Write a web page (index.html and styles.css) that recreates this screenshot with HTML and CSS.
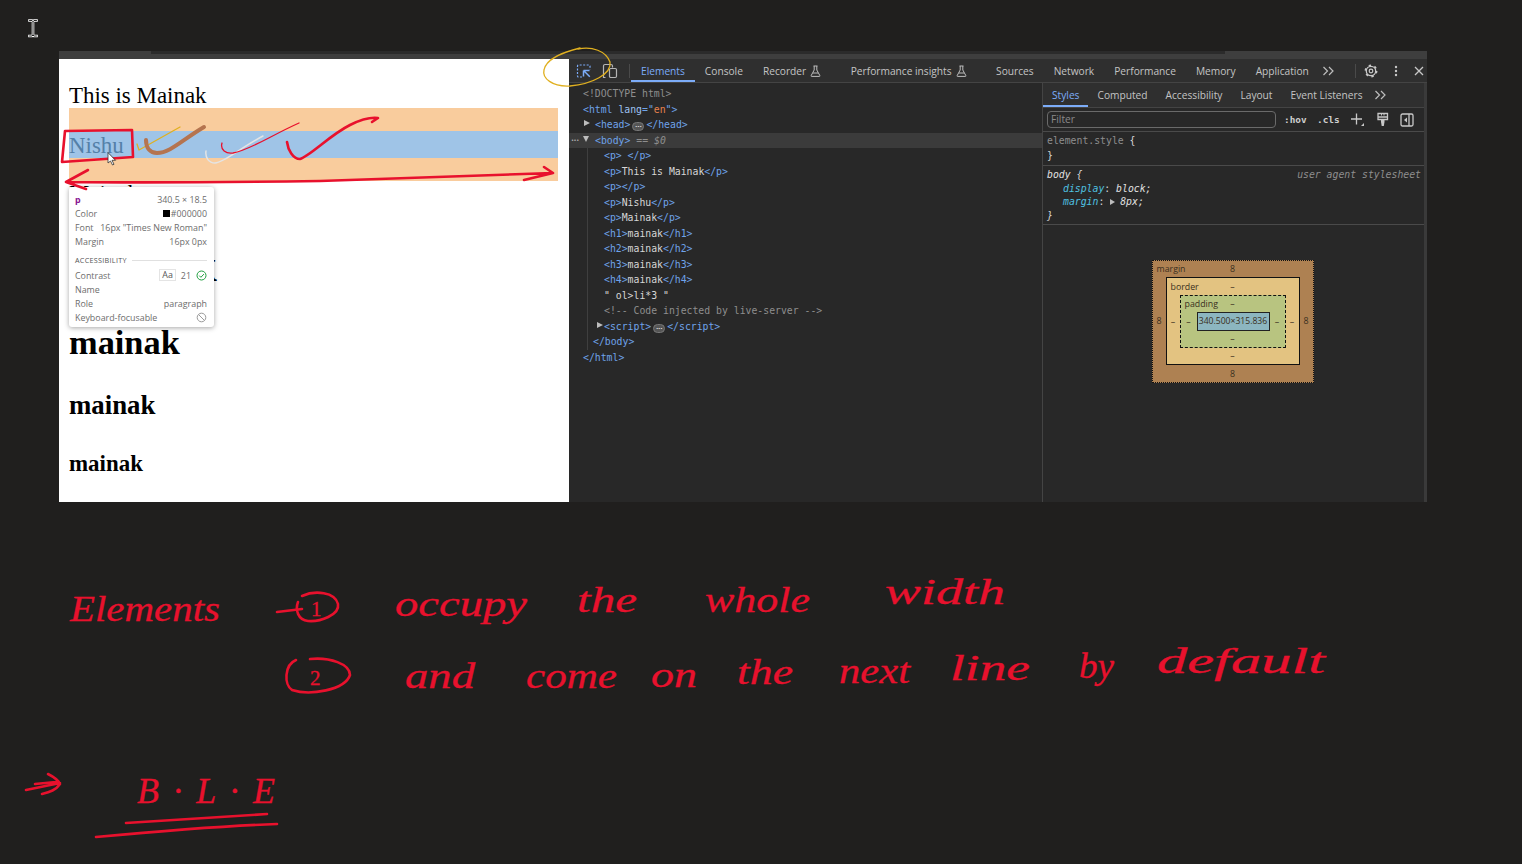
FILE: index.html
```html
<!DOCTYPE html>
<html lang="en">
<head>
    <meta charset="UTF-8">
    <title>Block level elements</title>
    <link rel="stylesheet" href="styles.css">
</head>
<body>
<div class="window">
    <div class="window-strip"><div class="window-strip-tab"></div></div>
    <div class="window-main">
        <div class="page">
            <p class="page-p">This is Mainak</p>
            <div class="hl-margin"><p class="hl-content">Nishu</p></div>
            <p class="page-p page-p-next">Mainak</p>
            <h1>mainak</h1>
            <h2>mainak</h2>
            <h3>mainak</h3>
            <h4>mainak</h4>

            <div class="tip">
                <div class="tip-row tip-head"><span class="tip-tag">p</span><span>340.5 × 18.5</span></div>
                <div class="tip-row"><span>Color</span><span class="tip-val"><i class="swatch"></i>#000000</span></div>
                <div class="tip-row"><span>Font</span><span class="tip-val">16px "Times New Roman"</span></div>
                <div class="tip-row"><span>Margin</span><span class="tip-val">16px 0px</span></div>
                <div class="tip-section"><span>ACCESSIBILITY</span><i class="tip-line"></i></div>
                <div class="tip-row">
                    <span>Contrast</span>
                    <span class="tip-val tip-contrast">
                        <b class="aa">Aa</b><span>21</span>
                        <svg width="11" height="11" viewBox="0 0 11 11"><circle cx="5.5" cy="5.5" r="4.5" fill="none" stroke="#1e9e3e" stroke-width="1"/><path d="M3.2 5.6l1.7 1.7 3-3.2" fill="none" stroke="#1e9e3e" stroke-width="1"/></svg>
                    </span>
                </div>
                <div class="tip-row"><span>Name</span></div>
                <div class="tip-row"><span>Role</span><span class="tip-val">paragraph</span></div>
                <div class="tip-row">
                    <span>Keyboard-focusable</span>
                    <svg width="11" height="11" viewBox="0 0 11 11"><circle cx="5.5" cy="5.5" r="4.3" fill="none" stroke="#9a9a9a" stroke-width="1"/><path d="M2.5 2.5l6 6" stroke="#9a9a9a" stroke-width="1"/></svg>
                </div>
            </div>
        </div>

        <div class="devtools">
            <div class="tabbar">
                <svg class="tool-icon" width="16" height="16" viewBox="0 0 16 16"><path d="M6 14H2.500A1 1 0 0 1 1.500 13V3A1 1 0 0 1 2.500 2H13A1 1 0 0 1 14 3V6.500" fill="none" stroke="#7cacf8" stroke-width="1.200" stroke-dasharray="2 1.500"/><path d="M7.500 7.500h6M7.500 7.500v6M7.800 7.800l6 6" fill="none" stroke="#7cacf8" stroke-width="1.500"/></svg>
                <svg class="tool-icon" width="16" height="16" viewBox="0 0 16 16"><path d="M3.500 14.500h-2V3A1.500 1.500 0 0 1 3 1.500h6A1.500 1.500 0 0 1 10.500 3v1.500" fill="none" stroke="#b5b5b5" stroke-width="1.200"/><rect x="7.500" y="5.500" width="7" height="9" rx="1.200" fill="none" stroke="#b5b5b5" stroke-width="1.200"/></svg>
                <i class="tabbar-div"></i>
                <span class="tab tab-on">Elements</span>
                <span class="tab">Console</span>
                <span class="tab tab-flask">Recorder
                    <svg width="11" height="12" viewBox="0 0 11 12"><path d="M3.500 1h4M4.200 1v4L1.200 10.500a.6.6 0 0 0 .5.9h7.600a.6.6 0 0 0 .5-.9L6.800 5V1M3 8h5" fill="none" stroke="#bdbdbd" stroke-width="1"/></svg>
                </span>
                <span class="tab tab-flask">Performance insights
                    <svg width="11" height="12" viewBox="0 0 11 12"><path d="M3.500 1h4M4.200 1v4L1.200 10.500a.6.6 0 0 0 .5.9h7.600a.6.6 0 0 0 .5-.9L6.800 5V1M3 8h5" fill="none" stroke="#bdbdbd" stroke-width="1"/></svg>
                </span>
                <span class="tab">Sources</span>
                <span class="tab">Network</span>
                <span class="tab">Performance</span>
                <span class="tab">Memory</span>
                <span class="tab">Application</span>
                <svg class="more" width="13" height="10" viewBox="0 0 13 10"><path d="M1.500 1l4 4-4 4M7 1l4 4-4 4" fill="none" stroke="#bdbdbd" stroke-width="1.200"/></svg>
                <div class="tabbar-right">
                    <i class="tabbar-div"></i>
                    <svg width="14" height="14" viewBox="0 0 14 14"><circle cx="7" cy="7" r="4.700" fill="none" stroke="#c8c8c8" stroke-width="1.300"/><circle cx="7" cy="7" r="5.600" fill="none" stroke="#c8c8c8" stroke-width="1.700" stroke-dasharray="2.300 3.560"/><circle cx="7" cy="7" r="1.800" fill="none" stroke="#c8c8c8" stroke-width="1.200"/></svg>
                    <svg width="4" height="12" viewBox="0 0 4 12"><circle cx="2" cy="2" r="1.200" fill="#c8c8c8"/><circle cx="2" cy="6" r="1.200" fill="#c8c8c8"/><circle cx="2" cy="10" r="1.200" fill="#c8c8c8"/></svg>
                    <svg width="10" height="10" viewBox="0 0 10 10"><path d="M1 1l8 8M9 1l-8 8" stroke="#c8c8c8" stroke-width="1.300"/></svg>
                </div>
            </div>

            <div class="panels">
                <div class="tree">
                    <div class="line indent-0"><span class="c-grey">&lt;!DOCTYPE html&gt;</span></div>
                    <div class="line indent-0"><span class="c-tag">&lt;html</span> <span class="c-attr">lang</span><span class="c-tag">="</span><span class="c-val">en</span><span class="c-tag">"&gt;</span></div>
                    <div class="line indent-1"><i class="tri tri-right"></i><span class="c-tag">&lt;head&gt;</span><span class="pill">•••</span><span class="c-tag">&lt;/head&gt;</span></div>
                    <div class="line indent-1 line-on"><span class="gutter-dots">•••</span><i class="tri tri-down"></i><span class="c-tag">&lt;body&gt;</span> <span class="c-grey c-it">== $0</span></div>
                    <div class="tree-body">
                        <div class="line"><span class="c-tag">&lt;p&gt; &lt;/p&gt;</span></div>
                        <div class="line"><span class="c-tag">&lt;p&gt;</span>This is Mainak<span class="c-tag">&lt;/p&gt;</span></div>
                        <div class="line"><span class="c-tag">&lt;p&gt;&lt;/p&gt;</span></div>
                        <div class="line"><span class="c-tag">&lt;p&gt;</span>Nishu<span class="c-tag">&lt;/p&gt;</span></div>
                        <div class="line"><span class="c-tag">&lt;p&gt;</span>Mainak<span class="c-tag">&lt;/p&gt;</span></div>
                        <div class="line"><span class="c-tag">&lt;h1&gt;</span>mainak<span class="c-tag">&lt;/h1&gt;</span></div>
                        <div class="line"><span class="c-tag">&lt;h2&gt;</span>mainak<span class="c-tag">&lt;/h2&gt;</span></div>
                        <div class="line"><span class="c-tag">&lt;h3&gt;</span>mainak<span class="c-tag">&lt;/h3&gt;</span></div>
                        <div class="line"><span class="c-tag">&lt;h4&gt;</span>mainak<span class="c-tag">&lt;/h4&gt;</span></div>
                        <div class="line">" ol&gt;li*3 "</div>
                        <div class="line"><span class="c-grey">&lt;!-- Code injected by live-server --&gt;</span></div>
                        <div class="line"><i class="tri tri-right tri-script"></i><span class="c-tag">&lt;script&gt;</span><span class="pill">•••</span><span class="c-tag">&lt;/script&gt;</span></div>
                        <div class="line line-close"><span class="c-tag">&lt;/body&gt;</span></div>
                    </div>
                    <div class="line indent-0"><span class="c-tag">&lt;/html&gt;</span></div>
                </div>

                <div class="side">
                    <div class="subtabs">
                        <span class="subtab subtab-on">Styles</span>
                        <span class="subtab">Computed</span>
                        <span class="subtab">Accessibility</span>
                        <span class="subtab">Layout</span>
                        <span class="subtab">Event Listeners</span>
                        <svg class="more-sub" width="13" height="10" viewBox="0 0 13 10"><path d="M1.500 1l4 4-4 4M7 1l4 4-4 4" fill="none" stroke="#bdbdbd" stroke-width="1.200"/></svg>
                    </div>
                    <div class="filterbar">
                        <div class="filter">Filter</div>
                        <span class="flag">:hov</span>
                        <span class="flag">.cls</span>
                        <div class="filter-icons">
                            <svg width="15" height="15" viewBox="0 0 15 15"><path d="M6.500 1.500v11M1 7h11" stroke="#c8c8c8" stroke-width="1.300"/><path d="M14 11v3h-3z" fill="#c8c8c8"/></svg>
                            <svg width="13" height="15" viewBox="0 0 13 15"><path d="M2 1.500h9.500v6H2zM2 5h9.500" fill="none" stroke="#c8c8c8" stroke-width="1.300"/><path d="M5.500 1.500v2M8 1.500v2" stroke="#c8c8c8"/><path d="M5 7.500h3.500V10l-.7 4h-2.100L5 10z" fill="#c8c8c8"/></svg>
                            <svg width="14" height="14" viewBox="0 0 14 14"><rect x="1" y="1" width="12" height="12" rx="1.500" fill="none" stroke="#c8c8c8" stroke-width="1.300"/><path d="M9 1v12" stroke="#c8c8c8" stroke-width="1.300"/><path d="M7 4.500v5L4 7z" fill="#c8c8c8"/></svg>
                        </div>
                    </div>
                    <div class="rule rule-el">
                        <div class="rule-line"><span class="c-grey">element.style</span> <span class="c-brace">{</span></div>
                        <div class="rule-line"><span class="c-brace">}</span></div>
                    </div>
                    <div class="rule rule-body">
                        <div class="rule-line rule-head"><span class="c-sel">body <span class="c-brace">{</span></span><span class="c-src">user agent stylesheet</span></div>
                        <div class="rule-line rule-prop"><span class="c-prop">display</span>: <span class="c-sel">block;</span></div>
                        <div class="rule-line rule-prop"><span class="c-prop">margin</span>: <i class="tri tri-right tri-inline"></i><span class="c-sel">8px;</span></div>
                        <div class="rule-line"><span class="c-brace c-it">}</span></div>
                    </div>
                    <div class="boxmodel">
                        <div class="bm bm-margin">
                            <div class="bm-top"><span class="bm-label">margin</span><span>8</span></div>
                            <span class="bm-side">8</span>
                            <div class="bm bm-border">
                                <div class="bm-top"><span class="bm-label">border</span><span>–</span></div>
                                <span class="bm-side">–</span>
                                <div class="bm bm-padding">
                                    <div class="bm-top"><span class="bm-label">padding</span><span>–</span></div>
                                    <span class="bm-side">–</span>
                                    <div class="bm-content">340.500×315.836</div>
                                    <span class="bm-side">–</span>
                                    <div class="bm-bottom">–</div>
                                </div>
                                <span class="bm-side">–</span>
                                <div class="bm-bottom">–</div>
                            </div>
                            <span class="bm-side">8</span>
                            <div class="bm-bottom">8</div>
                        </div>
                    </div>
                </div>
                <div class="rail"></div>
            </div>
        </div>
    </div>
</div>

<!-- pen annotations on top of the screen recording -->
<svg class="ink" width="1522" height="864" viewBox="0 0 1522 864">
    <g class="pen-yellow">
        <path d="M578 49C592 46 606 51 610 62C612 74 592 84 570 86C552 87 542 78 544 70C546 58 564 52 580 48"/>
        <path d="M137 144L139 150L180 127" class="thin"/>
    </g>
    <path class="pen-brown" d="M146 140C146 148 150 153 157 153C170 153 182 140 204 127"/>
    <path class="pen-white" d="M206 151C205 158 209 163 215 163C225 162 240 148 263 136"/>
    <g class="pen-red">
        <path d="M65 131L132 130L133 157L62 162Z"/>
        <path d="M287 142C288 150 293 159 300 159C310 156 330 135 350 125C362 119 370 117 378 118L372 122"/>
        <path d="M66 182C150 183 250 182 320 181C400 178 480 176 553 173M88 170L66 182L86 189M544 167L553 173L524 180"/>
        <path class="thin" d="M222 143C220 150 226 154 233 153C250 150 270 136 299 123"/>

        <path d="M277 612L302 609"/>
        <path d="M302 596C315 590 335 592 338 604C340 615 320 622 308 621C298 620 295 610 298 602"/>
        <path d="M296 660C284 665 284 685 292 690C310 696 345 690 350 675C350 664 330 657 310 659"/>
        <path d="M26 790L60 783M35 784L56 782M48 774C54 777 58 780 60 784C56 790 50 792 42 794"/>
        <path d="M126 823L267 814M96 837C150 832 220 826 277 824"/>
    </g>
    <path class="cursor-i-out" d="M29.500 20.500h2.500l1 1 1-1h2.500M33 21.500v14M29.500 36h2.500l1-1 1 1h2.500"/>
    <path class="cursor-i-in" d="M29.500 20.500h2.500l1 1 1-1h2.500M33 21.500v14M29.500 36h2.500l1-1 1 1h2.500"/>
    <path class="cursor-a" d="M108 153v10l2.500-2 2 4 1.500-.7-2-4h3.200z"/>

    <g class="ink-words">
        <text x="70" y="621" textLength="150" lengthAdjust="spacingAndGlyphs">Elements</text>
        <text x="395" y="616" textLength="132" lengthAdjust="spacingAndGlyphs">occupy</text>
        <text x="577" y="612" textLength="60" lengthAdjust="spacingAndGlyphs">the</text>
        <text x="705" y="612" textLength="105" lengthAdjust="spacingAndGlyphs">whole</text>
        <text x="885" y="604" textLength="120" lengthAdjust="spacingAndGlyphs">width</text>
        <text x="405" y="688" textLength="70" lengthAdjust="spacingAndGlyphs">and</text>
        <text x="526" y="688" textLength="91" lengthAdjust="spacingAndGlyphs">come</text>
        <text x="651" y="687" textLength="46" lengthAdjust="spacingAndGlyphs">on</text>
        <text x="737" y="684" textLength="56" lengthAdjust="spacingAndGlyphs">the</text>
        <text x="839" y="683" textLength="71" lengthAdjust="spacingAndGlyphs">next</text>
        <text x="950" y="680" textLength="80" lengthAdjust="spacingAndGlyphs">line</text>
        <text x="1079" y="678" textLength="35" lengthAdjust="spacingAndGlyphs">by</text>
        <text x="1157" y="673" textLength="168" lengthAdjust="spacingAndGlyphs">default</text>
        <text x="137" y="803" textLength="138" lengthAdjust="spacing">B · L · E</text>
        <text class="ink-num" x="311" y="616">1</text>
        <text class="ink-num" x="310" y="685">2</text>
    </g>
</svg>
</body>
</html>
```

FILE: styles.css
```css
body {
    margin: 0;
    height: 864px;
    overflow: hidden;
    background-color: #201f1e;
    font-family: "Open Sans", Arial, sans-serif;
    position: relative;
    padding: 51px 95px 0 59px;
    box-sizing: border-box;
}
.window {
    height: 451px;
    display: flex;
    flex-direction: column;
}
.window-strip {
    height: 8px;
    flex: none;
    background: #3e3e3e;
    padding-left: 92px;
    padding-right: 202px;
}
.window-strip-tab {
    height: 3px;
    background: #2b2b2b;
}
.window-main {
    flex: 1;
    display: flex;
    min-height: 0;
}

/* page under inspection */
.page {
    width: 510px;
    flex: none;
    background: #fff;
    padding: 0 11.5px 0 10px;
    box-sizing: border-box;
    position: relative;
    overflow: hidden;
    font-family: "Liberation Serif", "Times New Roman", serif;
    font-size: 22.93px;
    color: #000;
}
.page-p {
    margin: 24px 0 0;
    line-height: 25px;
}
.page-p-next {
    margin-top: 0;
    line-height: normal;
}
.hl-margin {
    background: #f9cc9d;
    padding: 23px 0;
}
.hl-content {
    margin: 0;
    padding-top: 2px;
    line-height: 25px;
    background: #9fc4e7;
    color: #5480a8;
}
.page h1 { font-size: 2em; margin: 32px 0 .67em; }
.page h2 { font-size: 1.5em; margin: .83em 0; }
.page h3 { font-size: 1.17em; margin: 28px 0 1em; }
.page h4 { font-size: 1em; margin: 29.5px 0 1.33em; }

.tip {
    position: absolute;
    left: 10px;
    top: 128px;
    width: 145px;
    height: 140px;
    box-sizing: border-box;
    padding: 5px 7px 0 6px;
    background: #fff;
    border-radius: 3px;
    box-shadow: 0 1px 5px rgba(0, 0, 0, .35);
    font-family: "Open Sans", Arial, sans-serif;
    font-size: 8.9px;
    color: #6d6d6d;
}
.tip-row {
    height: 14px;
    display: flex;
    justify-content: space-between;
    align-items: center;
}
.tip-tag {
    color: #881391;
    font-weight: 700;
}
.tip-val {
    display: flex;
    align-items: center;
}
.swatch {
    width: 7px;
    height: 7px;
    background: #000;
    margin-right: 1px;
}
.tip-section {
    display: flex;
    align-items: center;
    height: 16px;
    padding-top: 4px;
    font-size: 7.2px;
    letter-spacing: .3px;
    color: #555;
}
.tip-line {
    flex: 1;
    height: 1px;
    background: #e0e0e0;
    margin-left: 5px;
}
.tip-contrast {
    gap: 5px;
}
.aa {
    font-weight: 400;
    border: 1px solid #e4e4e4;
    padding: 0 2px;
    line-height: 10px;
    color: #555;
}

/* devtools */
.devtools {
    flex: 1;
    display: flex;
    flex-direction: column;
    min-width: 0;
    background: #282828;
    font-size: 10.2px;
    color: #c4c4c4;
}
.tabbar {
    height: 24px;
    flex: none;
    display: flex;
    align-items: center;
    padding-left: 7px;
    background: #2f2f2f;
    border-bottom: 1px solid #444;
    box-sizing: border-box;
}
.tool-icon {
    margin-right: 10px;
}
.tabbar-div {
    width: 1px;
    height: 14px;
    background: #4a4a4a;
    margin-left: 1px;
    margin-right: 1px;
}
.tab {
    height: 100%;
    display: flex;
    align-items: center;
    padding: 0 10px;
    box-sizing: border-box;
    white-space: nowrap;
}
.tab-on {
    color: #7cacf8;
    border-bottom: 2px solid #7cacf8;
    padding-top: 2px;
}
.tab svg {
    margin-left: 4px;
}
.tab-flask {
    margin-right: 9.5px;
}
.more {
    margin-left: 3px;
}
.tabbar-right {
    margin-left: auto;
    display: flex;
    align-items: center;
    gap: 16px;
    padding-right: 3px;
}
.tabbar-right .tabbar-div {
    margin-right: -8px;
}
.panels {
    flex: 1;
    display: flex;
    min-height: 0;
}
.tree {
    width: 474px;
    flex: none;
    padding-top: 3px;
    box-sizing: border-box;
    border-right: 1px solid #444;
    font-family: "DejaVu Sans Mono", "Liberation Mono", monospace;
    font-size: 9.8px;
    color: #d6d6d6;
}
.line {
    height: 15.5px;
    line-height: 15.5px;
    white-space: pre;
    position: relative;
}
.indent-0 { padding-left: 14px; }
.indent-1 { padding-left: 26px; }
.line-on {
    background: #3b3b3b;
}
.tree-body {
    margin-left: 18px;
    padding-left: 16px;
    border-left: 1px solid #3f3f3f;
}
.line-close {
    margin-left: -11px;
}
.c-grey { color: #8e8e8e; }
.c-tag { color: #6fa3ea; }
.c-attr { color: #9fc3f2; }
.c-val { color: #e9824d; }
.c-it { font-style: italic; }
.c-brace { color: #d6d6d6; }
.c-sel { color: #e0e0e0; font-style: italic; }
.c-prop { color: #4fc1e0; font-style: italic; }
.c-src { color: #8e8e8e; font-style: italic; }
.tri {
    position: absolute;
    width: 0;
    height: 0;
}
.tri-right {
    left: 15px;
    top: 3px;
    border-left: 6px solid #bdbdbd;
    border-top: 3.5px solid transparent;
    border-bottom: 3.5px solid transparent;
}
.tri-down {
    left: 14px;
    top: 3px;
    border-top: 6px solid #bdbdbd;
    border-left: 3.5px solid transparent;
    border-right: 3.5px solid transparent;
}
.tri-script {
    left: -7px;
}
.tri-inline {
    position: static;
    display: inline-block;
    margin-right: 5px;
    vertical-align: 0;
    border-left: 5px solid #bdbdbd;
    border-top-width: 3px;
    border-bottom-width: 3px;
}
.gutter-dots {
    position: absolute;
    left: 2px;
    font-size: 5px;
    letter-spacing: -.4px;
    color: #c8c8c8;
}
.pill {
    display: inline-block;
    width: 12px;
    height: 9px;
    margin: 0 2px;
    line-height: 7px;
    text-align: center;
    vertical-align: 0;
    border-radius: 5px;
    background: #555;
    border: 1px solid #777;
    box-sizing: border-box;
    font-size: 4px;
    letter-spacing: -.2px;
    color: #e0e0e0;
}
.side {
    flex: 1;
    min-width: 0;
    display: flex;
    flex-direction: column;
}
.rail {
    width: 3px;
    flex: none;
    background: #3a3a3a;
}
.subtabs {
    height: 25px;
    flex: none;
    display: flex;
    align-items: center;
    background: #2f2f2f;
    border-bottom: 1px solid #444;
    box-sizing: border-box;
}
.subtab {
    height: 100%;
    display: flex;
    align-items: center;
    padding: 0 9px;
    box-sizing: border-box;
    white-space: nowrap;
}
.subtab-on {
    color: #7cacf8;
    border-bottom: 2px solid #7cacf8;
    padding-top: 2px;
}
.more-sub {
    margin-left: 2px;
}
.filterbar {
    height: 24px;
    flex: none;
    display: flex;
    align-items: center;
    padding-left: 4px;
    border-bottom: 1px solid #4a4a4a;
    box-sizing: border-box;
}
.filter {
    width: 229px;
    height: 17px;
    line-height: 15px;
    box-sizing: border-box;
    padding-left: 3px;
    border: 1px solid #6a6a6a;
    border-radius: 4px;
    color: #8a8a8a;
    margin-right: 8px;
}
.flag {
    width: 33px;
    font-family: "DejaVu Sans Mono", "Liberation Mono", monospace;
    font-size: 9.4px;
    font-weight: 700;
    color: #cfcfcf;
}
.filter-icons {
    display: flex;
    align-items: center;
    gap: 11px;
}
.rule {
    padding: 1px 4px 2px;
    border-bottom: 1px solid #4a4a4a;
    font-family: "DejaVu Sans Mono", "Liberation Mono", monospace;
    font-size: 9.8px;
}
.rule-el {
    height: 34px;
    box-sizing: border-box;
}
.rule-body {
    height: 59px;
    box-sizing: border-box;
    padding-top: 2px;
    padding-right: 0;
}
.rule-line {
    height: 13.300px;
    line-height: 13.300px;
    white-space: pre;
}
.rule-el .rule-line {
    height: 15px;
    line-height: 15px;
}
.rule-head {
    display: flex;
    justify-content: space-between;
    padding-right: 3px;
    height: 14px;
}
.rule-prop {
    padding-left: 16px;
    color: #d6d6d6;
}
.boxmodel {
    display: flex;
    justify-content: center;
    padding: 35px 2px 0 0;
}
.bm {
    display: grid;
    align-items: center;
    justify-items: center;
    box-sizing: border-box;
    font-size: 8.8px;
    color: #3a3020;
}
.bm-margin {
    width: 162px;
    height: 123px;
    grid-template-columns: 13px 1fr 13px;
    grid-template-rows: 16px 1fr 17px;
    background: #ae8152;
    border: 1px dotted #111;
}
.bm-border {
    width: 100%;
    height: 100%;
    grid-template-columns: 13px 1fr 13px;
    grid-template-rows: 17px 1fr 16px;
    background: #e3c381;
    border: 1px solid #111;
}
.bm-padding {
    width: 100%;
    height: 100%;
    grid-template-columns: 16px 1fr 15px;
    grid-template-rows: 16px 1fr 16px;
    background: #b8c480;
    border: 1px dashed #111;
}
.bm-top {
    grid-column: 1 / 4;
    width: 100%;
    display: grid;
    grid-template-columns: 1fr auto 1fr;
    justify-items: center;
}
.bm-label {
    justify-self: start;
    padding-left: 4px;
}
.bm-bottom {
    grid-column: 1 / 4;
}
.bm-content {
    width: 100%;
    height: 100%;
    box-sizing: border-box;
    border: 1px solid #222;
    background: #8cb6c0;
    font-size: 8.6px;
    line-height: 17px;
    text-align: center;
    white-space: nowrap;
}

/* ink layer */
.ink {
    position: absolute;
    left: 0;
    top: 0;
    pointer-events: none;
}
.ink path {
    fill: none;
    stroke-linecap: round;
    stroke-linejoin: round;
}
.pen-red path {
    stroke: #e8112d;
    stroke-width: 2.600;
}
.pen-yellow path {
    stroke: #e0b020;
    stroke-width: 1.300;
}
.pen-red path.thin {
    stroke-width: 1.300;
}
.pen-brown {
    stroke: #b5744f;
    stroke-width: 4;
}
.pen-white {
    stroke: #e4e4e4;
    stroke-width: 1.500;
}
.ink .cursor-i-out {
    stroke: #fff;
    stroke-width: 2.600;
    stroke-linecap: square;
}
.ink .cursor-i-in {
    stroke: #111;
    stroke-width: .9;
}
.ink .cursor-a {
    fill: #fff;
    stroke: #333;
    stroke-width: .8;
}
.ink-words text {
    fill: #e8112d;
    stroke: #e8112d;
    stroke-width: .3px;
    font-family: "Liberation Serif", serif;
    font-style: italic;
    font-size: 36px;
}
.ink-words .ink-num {
    font-size: 21px;
    font-style: normal;
}
```
